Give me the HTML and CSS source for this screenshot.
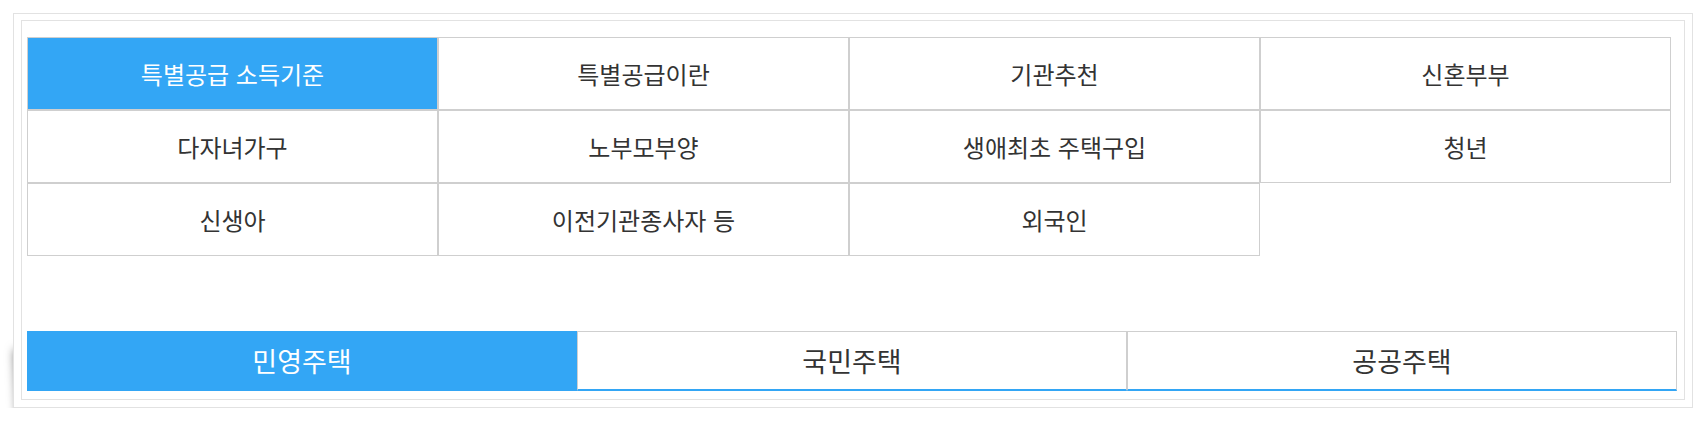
FILE: index.html
```html
<!DOCTYPE html>
<html lang="ko">
<head>
<meta charset="utf-8">
<title>특별공급</title>
<link rel="stylesheet" href="styles.css">
</head>
<body>
<div class="frame">
  <div class="panel">
    <div class="menu-grid">
      <div class="cell active">특별공급 소득기준</div>
      <div class="cell">특별공급이란</div>
      <div class="cell">기관추천</div>
      <div class="cell">신혼부부</div>
      <div class="cell">다자녀가구</div>
      <div class="cell">노부모부양</div>
      <div class="cell">생애최초 주택구입</div>
      <div class="cell">청년</div>
      <div class="cell">신생아</div>
      <div class="cell">이전기관종사자 등</div>
      <div class="cell">외국인</div>
    </div>
    <div class="tabs">
      <div class="tab active">민영주택</div>
      <div class="tab">국민주택</div>
      <div class="tab">공공주택</div>
    </div>
  </div>
</div>
</body>
</html>
```

FILE: styles.css
```css
html {
  background: #ffffff;
}

html, body {
  margin: 0;
  padding: 0;
}

body {
  font-family: "Noto Sans CJK KR", "Noto Sans", sans-serif;
  color: #333333;
}

.frame {
  position: relative;
  box-sizing: border-box;
  width: 1680px;
  height: 395px;
  margin: 13px 0 0 13px;
  padding: 6px 7px 7px 7px;
  border: 1px solid #e2e2e2;
  background: #ffffff;
}

.frame::before {
  content: "";
  position: absolute;
  z-index: -1;
  left: 6px;
  bottom: 6px;
  width: 170px;
  height: 70px;
  background: #ffffff;
  box-shadow: -5px 14px 10px rgba(0, 0, 0, 0.55);
  transform: rotate(-3deg);
}

.panel {
  box-sizing: border-box;
  height: 380px;
  border: 1px solid #e2e2e2;
  padding: 16px 6px 0 5px;
  display: flex;
  flex-direction: column;
}

.menu-grid {
  display: grid;
  grid-template-columns: repeat(4, 411px);
  grid-auto-rows: 73px;
}

.cell {
  box-sizing: border-box;
  border: 1px solid #cfcfcf;
  display: flex;
  align-items: center;
  justify-content: center;
  font-size: 24px;
  color: #333333;
}

.cell.active {
  background: #33a6f5;
  color: #ffffff;
}

.tabs {
  display: flex;
  margin-top: 75px;
}

.tab {
  box-sizing: border-box;
  width: 550px;
  height: 60px;
  border: 1px solid #cfcfcf;
  border-bottom: 2px solid #33a6f5;
  display: flex;
  align-items: center;
  justify-content: center;
  font-size: 27px;
  color: #333333;
}

.tab.active {
  background: #33a6f5;
  border-color: #33a6f5;
  color: #ffffff;
}
```
